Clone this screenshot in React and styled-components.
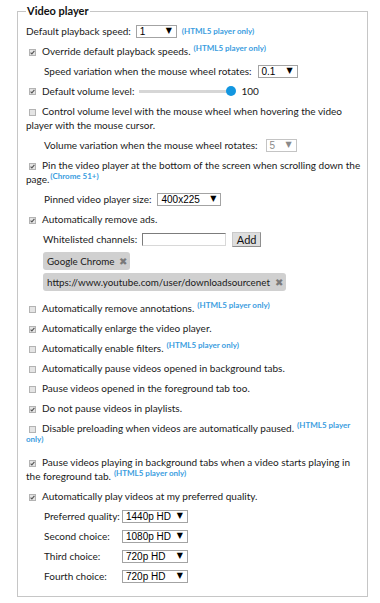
import React from "react";
import styled, { createGlobalStyle } from "styled-components";

const GlobalStyle = createGlobalStyle`
  html, body { margin: 0; padding: 0; background: #fff; }
  body {
    font-family: "Lato", "Noto Sans", sans-serif;
    font-size: 10px;
    color: #1a1a1a;
  }
`;

const Fieldset = styled.fieldset`
  margin: 5px 12px 0 17px;
  padding: 4px 9px 10px 8px;
  border: 1px solid #c6c6c6;
  min-width: 0;
`;

const Legend = styled.legend`
  font-weight: bold;
  font-size: 11px;
  line-height: 12px;
  padding: 0 1px;
  color: #111;
`;

const Line = styled.div`
  padding: 3px 0 3px ${(p) => p.$indent || 0}px;
  line-height: 14px;
  white-space: nowrap;
`;

const FlexLine = styled.div`
  display: flex;
  align-items: center;
  gap: ${(p) => p.$gap ?? 5}px;
  height: 14px;
  padding: 3px 0 3px ${(p) => p.$indent || 0}px;
  white-space: nowrap;
`;

const Label = styled.span`
  display: inline-block;
  ${(p) => (p.$w ? `width: ${p.$w}px;` : "")}
  ${(p) => (p.$ml ? `margin-left: ${p.$ml}px;` : "")}
`;

const Box = styled.span`
  display: inline-block;
  box-sizing: border-box;
  width: 7px;
  height: 7px;
  margin: 0 6px 0 3px;
  vertical-align: -1px;
  border: 1px solid #b3b3b3;
  background: #e4e4e4;
  position: relative;
  flex: none;
  svg { display: block; position: absolute; left: 0; top: 0; }
`;

const Checkbox = ({ checked }) => (
  <Box>
    {checked && (
      <svg width="5" height="5" viewBox="0 0 5 5">
        <path d="M0.6 2.6 L1.9 3.9 L4.4 0.8" fill="none" stroke="#555" strokeWidth="1.1" />
      </svg>
    )}
  </Box>
);

const Sup = styled.span`
  font-size: 8px;
  font-weight: bold;
  color: #3a9de0;
  vertical-align: 4px;
  line-height: 0;
  margin-left: ${(p) => p.$ml ?? 3}px;
`;

const SelectBox = styled.span`
  display: inline-flex;
  align-items: center;
  justify-content: space-between;
  box-sizing: border-box;
  width: ${(p) => p.$w}px;
  height: 13px;
  padding: 0 4px 0 3px;
  border: 1px solid ${(p) => (p.$disabled ? "#c4c4c4" : "#a3a3a3")};
  background: #fff;
  font-family: "Liberation Sans", Arial, sans-serif;
  font-size: 10px;
  color: ${(p) => (p.$disabled ? "#8a8a8a" : "#000")};
`;

const Arrow = styled.span`
  font-family: "DejaVu Sans", sans-serif;
  font-size: 8px;
  line-height: 1;
  color: ${(p) => (p.$disabled ? "#8a8a8a" : "#000")};
`;

const Select = ({ w, value, disabled }) => (
  <SelectBox $w={w} $disabled={disabled}>
    <span>{value}</span>
    <Arrow $disabled={disabled}>▼</Arrow>
  </SelectBox>
);

const Track = styled.span`
  position: relative;
  display: inline-block;
  width: 92px;
  height: 3px;
  margin-left: 5px;
  background: #d6d6d6;
`;

const Thumb = styled.span`
  position: absolute;
  right: -5px;
  top: -4px;
  width: 10px;
  height: 10px;
  border-radius: 50%;
  background: #1296e0;
`;

const TextInput = styled.input`
  box-sizing: border-box;
  width: 84px;
  height: 13px;
  padding: 0;
  margin: 0;
  border: 1px solid;
  border-color: #7c7c7c #d8d8d8 #d8d8d8 #7c7c7c;
  background: #fff;
`;

const Button = styled.button`
  box-sizing: border-box;
  width: 29px;
  height: 15px;
  padding: 0;
  margin: 0 0 0 1px;
  border: 1px solid;
  border-color: #c9c9c9 #8e8e8e #8e8e8e #c9c9c9;
  background: #dedede;
  font-family: "Lato", sans-serif;
  font-size: 11px;
  color: #111;
  line-height: 1;
`;

const TagList = styled.div`
  display: flex;
  flex-direction: column;
  align-items: flex-start;
  gap: 3px;
  padding: 3px 0 7px 17px;
`;

const Tag = styled.span`
  display: inline-flex;
  align-items: center;
  gap: 5px;
  height: 18px;
  padding: 0 3px 0 4px;
  background: #d0d0d0;
  border-radius: 3px;
  font-size: 9.8px;
  color: #1a1a1a;
`;

const Close = styled.span`
  color: #7a7a7a;
  font-size: 10px;
`;

const HTML5 = "(HTML5 player only)";

export default function App() {
  return (
    <>
      <GlobalStyle />
      <Fieldset>
        <Legend>Video player</Legend>

        <FlexLine>
          <Label>Default playback speed:</Label>
          <Select w={41} value="1" />
          <Sup $ml={0}>{HTML5}</Sup>
        </FlexLine>

        <Line>
          <Checkbox checked />
          Override default playback speeds.<Sup>{HTML5}</Sup>
        </Line>

        <FlexLine $indent={18} $gap={6}>
          <Label>Speed variation when the mouse wheel rotates:</Label>
          <Select w={40} value="0.1" />
        </FlexLine>

        <FlexLine $gap={0}>
          <Checkbox checked />
          <Label>Default volume level:</Label>
          <Track>
            <Thumb />
          </Track>
          <Label $ml={10}>100</Label>
        </FlexLine>

        <Line>
          <Checkbox />
          Control volume level with the mouse wheel when hovering the video
          <br />
          player with the mouse cursor.
        </Line>

        <FlexLine $indent={18} $gap={8}>
          <Label>Volume variation when the mouse wheel rotates:</Label>
          <Select w={31} value="5" disabled />
        </FlexLine>

        <Line>
          <Checkbox checked />
          Pin the video player at the bottom of the screen when scrolling down the
          <br />
          page.<Sup $ml={1}>(Chrome 51+)</Sup>
        </Line>

        <FlexLine $indent={18} $gap={6}>
          <Label>Pinned video player size:</Label>
          <Select w={64} value="400x225" />
        </FlexLine>

        <Line>
          <Checkbox checked />
          Automatically remove ads.
        </Line>

        <FlexLine $indent={17} $gap={5}>
          <Label>Whitelisted channels:</Label>
          <TextInput />
          <Button>Add</Button>
        </FlexLine>

        <TagList>
          <Tag>
            Google Chrome <Close>✖</Close>
          </Tag>
          <Tag>
            https://www.youtube.com/user/downloadsourcenet <Close>✖</Close>
          </Tag>
        </TagList>

        <Line>
          <Checkbox />
          Automatically remove annotations.<Sup>{HTML5}</Sup>
        </Line>
        <Line>
          <Checkbox checked />
          Automatically enlarge the video player.
        </Line>
        <Line>
          <Checkbox />
          Automatically enable filters.<Sup>{HTML5}</Sup>
        </Line>
        <Line>
          <Checkbox />
          Automatically pause videos opened in background tabs.
        </Line>
        <Line>
          <Checkbox />
          Pause videos opened in the foreground tab too.
        </Line>
        <Line>
          <Checkbox checked />
          Do not pause videos in playlists.
        </Line>
        <Line>
          <Checkbox />
          Disable preloading when videos are automatically paused.
          <Sup>
            (HTML5 player
            <br />
          </Sup>
          <Sup $ml={0}>only)</Sup>
        </Line>
        <Line>
          <Checkbox checked />
          Pause videos playing in background tabs when a video starts playing in
          <br />
          the foreground tab.<Sup>{HTML5}</Sup>
        </Line>
        <Line>
          <Checkbox checked />
          Automatically play videos at my preferred quality.
        </Line>

        <FlexLine $indent={18} $gap={0}>
          <Label $w={78}>Preferred quality:</Label>
          <Select w={66} value="1440p HD" />
        </FlexLine>
        <FlexLine $indent={18} $gap={0}>
          <Label $w={78}>Second choice:</Label>
          <Select w={66} value="1080p HD" />
        </FlexLine>
        <FlexLine $indent={18} $gap={0}>
          <Label $w={78}>Third choice:</Label>
          <Select w={66} value="720p HD" />
        </FlexLine>
        <FlexLine $indent={18} $gap={0}>
          <Label $w={78}>Fourth choice:</Label>
          <Select w={66} value="720p HD" />
        </FlexLine>
      </Fieldset>
    </>
  );
}
